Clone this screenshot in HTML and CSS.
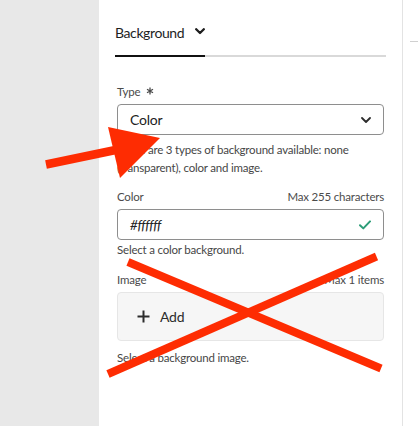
FILE: index.html
```html
<!DOCTYPE html>
<html lang="en">
<head>
<meta charset="utf-8">
<title>Background</title>
<link rel="stylesheet" href="styles.css">
</head>
<body>
<div class="page">
  <div class="gutter"></div>
  <div class="panel">
    <div class="tabs">
      <div class="tab">
        <span class="tab-label">Background</span>
        <svg class="tab-chevron" width="10" height="7" viewBox="0 0 10 7"><path d="M1.2 1.2 L5 5 L8.8 1.2" fill="none" stroke="#1e1e1e" stroke-width="2.3" stroke-linecap="round" stroke-linejoin="round"/></svg>
      </div>
      <div class="tabs-rest"></div>
    </div>
    <div class="form">
      <div class="field field-type">
        <div class="label-row"><span class="label">Type <svg class="req" width="8" height="8" viewBox="0 0 8 8"><path d="M4 0.5 V7.5 M1 2.2 L7 5.8 M7 2.2 L1 5.8" fill="none" stroke="#4b4b4b" stroke-width="1.3"/></svg></span></div>
        <div class="select">
          <span class="value">Color</span>
          <svg width="10" height="6" viewBox="0 0 10 6"><path d="M1 1 L5 5 L9 1" fill="none" stroke="#2c2c2c" stroke-width="1.8" stroke-linecap="round" stroke-linejoin="round"/></svg>
        </div>
        <p class="help help-type">There are 3 types of background available: none (transparent), color and image.</p>
      </div>
      <div class="field field-color">
        <div class="label-row"><span class="label">Color</span><span class="label">Max 255 characters</span></div>
        <div class="input">
          <span class="value value-italic">#ffffff</span>
          <svg width="12" height="10" viewBox="0 0 12 10"><path d="M1 5.2 L4.3 8.4 L11 1.4" fill="none" stroke="#2d9d78" stroke-width="2" stroke-linecap="round" stroke-linejoin="round"/></svg>
        </div>
        <p class="help help-color">Select a color background.</p>
      </div>
      <div class="field field-image">
        <div class="label-row"><span class="label">Image</span><span class="label">Max 1 items</span></div>
        <div class="add">
          <svg width="13" height="13" viewBox="0 0 13 13"><path d="M6.5 0.5 V12.5 M0.5 6.5 H12.5" fill="none" stroke="#2c2c2c" stroke-width="2"/></svg>
          <span class="add-label">Add</span>
        </div>
        <p class="help help-image">Select a background image.</p>
      </div>
    </div>
  </div>
  <div class="side">
    <div class="side-line"></div>
  </div>
</div>
<svg class="annotations" width="418" height="426" viewBox="0 0 418 426">
  <line x1="46" y1="164.5" x2="118" y2="149.5" stroke="#fe2c02" stroke-width="8.5"/>
  <polygon points="108,127 160,138 120,178" fill="#fe2c02"/>
  <line x1="128" y1="262" x2="381" y2="368.5" stroke="#fe2c02" stroke-width="8"/>
  <line x1="376.5" y1="256.5" x2="108" y2="374" stroke="#fe2c02" stroke-width="8"/>
</svg>
</body>
</html>
```

FILE: styles.css
```css
html, body {
  margin: 0;
  padding: 0;
}
body {
  width: 418px;
  height: 426px;
  overflow: hidden;
  position: relative;
  font-family: Lato, "Noto Sans", sans-serif;
  color: #222;
  background: #fff;
}
.page {
  display: flex;
  height: 426px;
}
.gutter {
  width: 99px;
  background: #e8e8e8;
}
.panel {
  width: 271px;
  padding: 23px 16px 0 16px;
  background: #fff;
  border-right: 1px solid #e3e3e3;
}
.tabs {
  display: flex;
}
.tab {
  display: flex;
  align-items: center;
  justify-content: space-between;
  width: 90px;
  padding-bottom: 12px;
  border-bottom: 2px solid #111;
}
.tab-label {
  font-size: 14px;
  line-height: 20px;
  letter-spacing: -0.4px;
  color: #1e1e1e;
}
.tab-chevron {
  flex-shrink: 0;
  margin-top: -3px;
}
.tabs-rest {
  flex: 1;
  border-bottom: 2px solid #d9d9d9;
}
.form {
  padding: 0 2px;
}
.field {
  display: flex;
  flex-direction: column;
}
.field-type {
  margin-top: 27px;
}
.field-color {
  margin-top: 12px;
}
.field-image {
  margin-top: 13px;
}
.label-row {
  display: flex;
  justify-content: space-between;
  margin-bottom: 4px;
}
.label {
  font-size: 11.5px;
  line-height: 16px;
  letter-spacing: -0.2px;
  color: #4b4b4b;
}
.req {
  margin-left: 3px;
  vertical-align: 1px;
}
.select, .input {
  height: 29px;
  border: 1px solid #8e8e8e;
  border-radius: 4px;
  display: flex;
  align-items: center;
  justify-content: space-between;
  padding: 0 12px 0 12px;
}
.value {
  font-size: 14px;
  letter-spacing: -0.2px;
  color: #222;
}
.value-italic {
  font-style: italic;
  font-size: 13.5px;
  letter-spacing: -0.4px;
}
.help {
  margin: 0;
  font-size: 11.5px;
  line-height: 18px;
  letter-spacing: -0.2px;
  color: #464646;
}
.help-type {
  margin-top: 6px;
}
.help-color {
  margin-top: 1px;
}
.help-image {
  margin-top: 8px;
}
.add {
  height: 47px;
  background: #f6f6f6;
  border: 1px solid #e6e6e6;
  border-radius: 4px;
  display: flex;
  align-items: center;
  gap: 10px;
  padding-left: 19px;
}
.add-label {
  font-size: 14px;
  letter-spacing: -0.2px;
  color: #2c2c2c;
}
.side {
  flex: 1;
  background: #fff;
  padding-top: 41px;
  display: flex;
  justify-content: flex-end;
}
.side-line {
  width: 8px;
  height: 1px;
  background: #d0d0d0;
}
.annotations {
  position: absolute;
  left: 0;
  top: 0;
  pointer-events: none;
}
```
